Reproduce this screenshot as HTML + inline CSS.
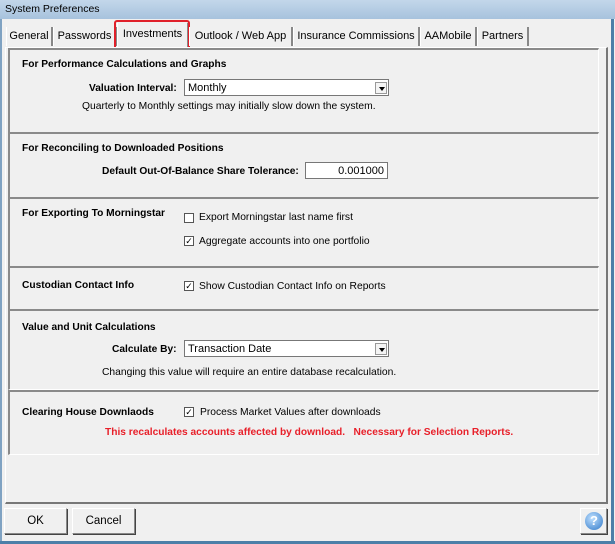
<!DOCTYPE html>
<html><head><style>
*{margin:0;padding:0;box-sizing:border-box}
body{width:615px;height:544px;background:#f0f0f0;font-family:"Liberation Sans",Arial,sans-serif;font-size:10.3px;color:#000;position:relative;overflow:hidden}
.a{position:absolute;white-space:nowrap}
.b{font-weight:bold;font-size:10.2px}
.sec{position:absolute;left:8px;width:591px;border-top:2px solid #8a8a8a;border-left:2px solid #8a8a8a;border-bottom:1px solid #fff;border-right:1px solid #fff}
.tab{position:absolute;top:27px;height:19px;border-left:1px solid #fff;border-right:2px solid #888;padding:3px 0 0 0;font-size:11px;text-align:center}
.cb{position:absolute;width:10px;height:10px;border:1px solid #555;background:#fff;font-size:9px;line-height:8px;text-align:center}
.inp{position:absolute;background:#fff;border:1px solid #777;height:17px;padding:2px 3px;font-size:11px}
.dd{position:absolute;right:1px;top:2px;width:12px;height:12px;border:1px solid #999;background:#f4f4f4}
.dd:after{content:"";position:absolute;left:3px;top:4px;border:3px solid transparent;border-top:4px solid #000}
.btn{position:absolute;top:508px;height:26px;border:1px solid #888;border-top-color:#fff;border-left-color:#fff;box-shadow:1px 1px 0 #444;background:#f0f0f0;text-align:center;line-height:24px;font-size:11.5px}
</style></head><body>
<div class="a" style="left:0;top:0;width:615px;height:19px;background:linear-gradient(#c3d7ea,#a7c2dd);padding:3px 5px;font-size:10.5px">System Preferences</div>
<div class="a" style="left:611px;top:19px;width:3px;height:525px;background:#4c7fa8"></div>
<div class="a" style="left:0;top:19px;width:2px;height:525px;background:#7fa2c2"></div>
<div class="a" style="left:0;top:541px;width:615px;height:3px;background:#4c7fa8"></div>
<div class="tab" style="left:6px;width:47px">General</div>
<div class="tab" style="left:53px;width:64px">Passwords</div>
<div class="tab" style="left:117px;width:72px;top:23px;height:24px;padding-top:5px">Investments</div>
<div class="a" style="left:114px;top:20px;width:76px;height:30px;border:2px solid #e0202a;border-radius:3px"></div>
<div class="tab" style="left:189px;width:104px">Outlook / Web App</div>
<div class="tab" style="left:293px;width:127px">Insurance Commissions</div>
<div class="tab" style="left:420px;width:57px">AAMobile</div>
<div class="tab" style="left:477px;width:52px">Partners</div>
<div class="a" style="left:5px;top:47px;width:603px;height:457px;border-top:1px solid #fff;border-left:1px solid #fff;border-right:2px solid #777;border-bottom:2px solid #777"></div>

<div class="sec" style="top:48px;height:85px"></div>
<div class="a b" style="left:22px;top:59px">For Performance Calculations and Graphs</div>
<div class="a b" style="left:89px;top:83px">Valuation Interval:</div>
<div class="inp" style="left:184px;top:79px;width:205px">Monthly<div class="dd"></div></div>
<div class="a" style="left:82px;top:101px">Quarterly to Monthly settings may initially slow down the system.</div>

<div class="sec" style="top:132px;height:66px"></div>
<div class="a b" style="left:22px;top:143px">For Reconciling to Downloaded Positions</div>
<div class="a b" style="left:102px;top:166px">Default Out-Of-Balance Share Tolerance:</div>
<div class="inp" style="left:305px;top:162px;width:83px;text-align:right">0.001000</div>

<div class="sec" style="top:197px;height:70px"></div>
<div class="a b" style="left:22px;top:208px">For Exporting To Morningstar</div>
<div class="cb" style="left:184px;top:213px"></div>
<div class="a" style="left:199px;top:212px">Export Morningstar last name first</div>
<div class="cb" style="left:184px;top:236px">✓</div>
<div class="a" style="left:199px;top:236px">Aggregate accounts into one portfolio</div>

<div class="sec" style="top:266px;height:44px"></div>
<div class="a b" style="left:22px;top:280px">Custodian Contact Info</div>
<div class="cb" style="left:184px;top:281px">✓</div>
<div class="a" style="left:199px;top:281px">Show Custodian Contact Info on Reports</div>

<div class="sec" style="top:309px;height:81px"></div>
<div class="a b" style="left:22px;top:322px">Value and Unit Calculations</div>
<div class="a b" style="left:112px;top:344px">Calculate By:</div>
<div class="inp" style="left:184px;top:340px;width:205px">Transaction Date<div class="dd"></div></div>
<div class="a" style="left:102px;top:367px">Changing this value will require an entire database recalculation.</div>

<div class="sec" style="top:390px;height:65px"></div>
<div class="a b" style="left:22px;top:407px">Clearing House Downlaods</div>
<div class="cb" style="left:184px;top:407px">✓</div>
<div class="a" style="left:200px;top:407px">Process Market Values after downloads</div>
<div class="a b" style="left:105px;top:427px;color:#e8202a;font-size:10.2px">This recalculates accounts affected by download. &nbsp; Necessary for Selection Reports.</div>

<div class="btn" style="left:4px;width:63px">OK</div>
<div class="btn" style="left:72px;width:63px">Cancel</div>
<div class="btn" style="left:580px;width:27px"><div style="position:absolute;left:4px;top:3px;width:18px;height:18px;border-radius:50%;background:radial-gradient(circle at 40% 35%,#bfe0ff,#2f78c8);color:#fff;font-weight:bold;font-size:13px;line-height:18px">?</div></div>
</body></html>
